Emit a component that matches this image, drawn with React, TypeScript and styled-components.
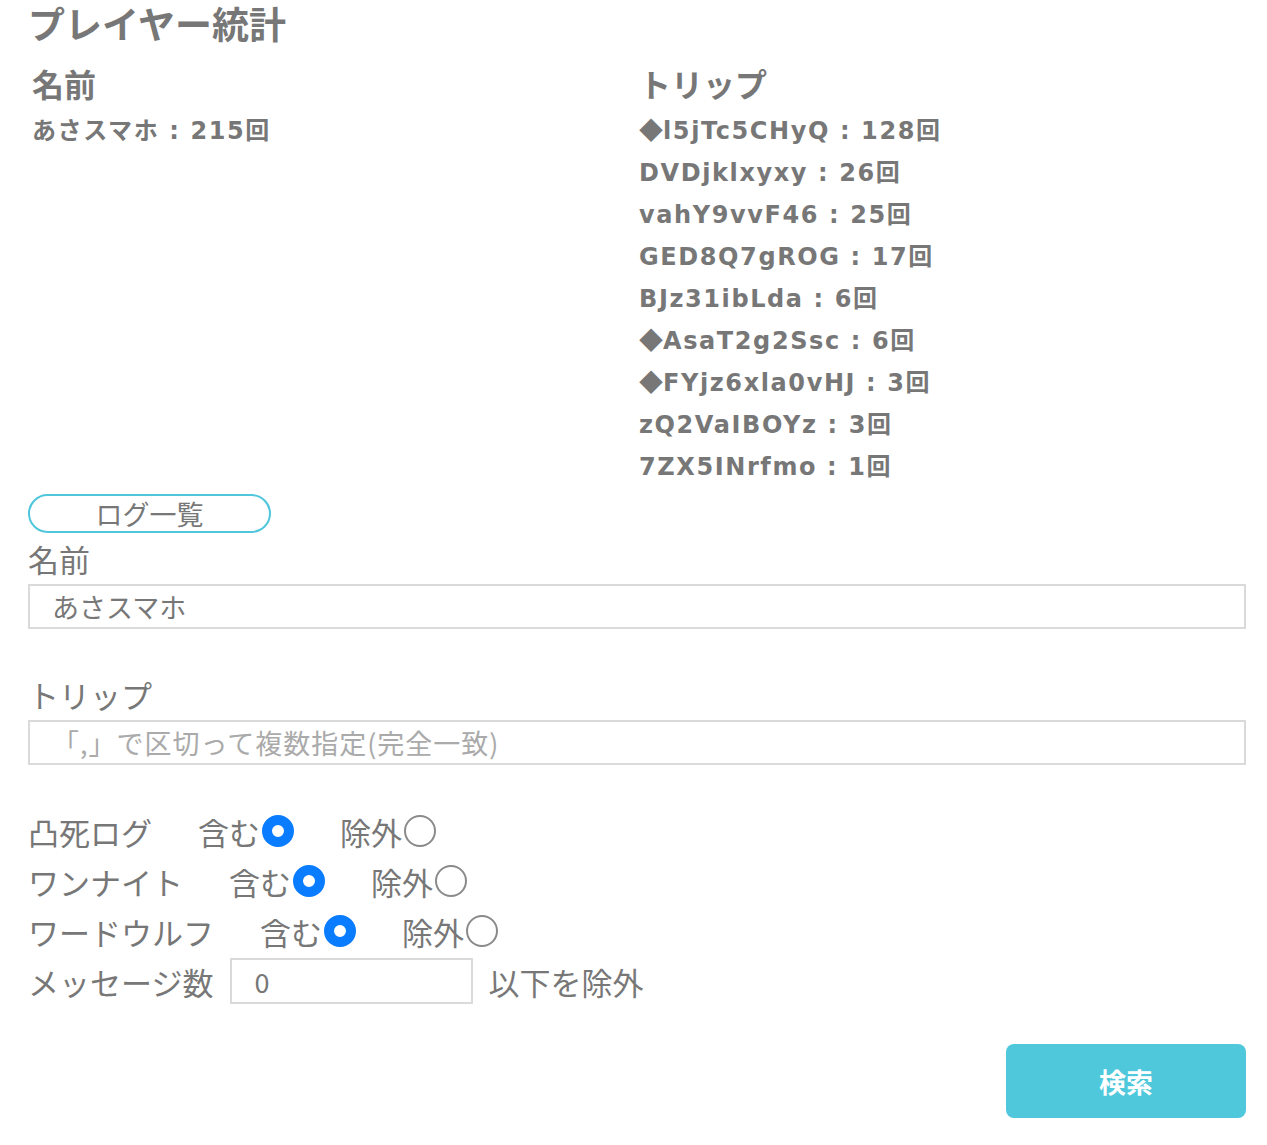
import React, { useState } from 'react';
import styled, { createGlobalStyle } from 'styled-components';

const GlobalStyle = createGlobalStyle`
body {
    margin: 0;
    background: #ffffff;
    font-family: "Noto Sans CJK JP", "Noto Sans", sans-serif;
    color: #777777;
}
`;

const Page = styled.div`
width: 1218px;
padding: 0 21px 28px 28px;
`;

const Title = styled.h1`
margin: 0;
font-size: 37px;
line-height: 46px;
font-weight: 700;
`;

const StatsGrid = styled.div`
display: grid;
grid-template-columns: 1fr 1fr;
margin-top: 16px;
`;

const StatsColumn = styled.div`
padding-left: ${(p: { $pad: number }) => p.$pad}px;
`;

const StatsHeading = styled.h2`
margin: 0 0 6px;
font-size: 32px;
line-height: 42px;
font-weight: 700;
`;

const StatsItem = styled.div`
height: 42px;
font-family: "DejaVu Sans", "Noto Sans CJK JP", sans-serif;
font-size: 24px;
line-height: 42px;
font-weight: 700;
letter-spacing: 1.6px;
white-space: nowrap;
`;

const Diamond = styled.span`
font-family: "Noto Sans CJK JP", sans-serif;
line-height: 1;
letter-spacing: 0;
`;

const LogButton = styled.button`
display: block;
margin-top: 6px;
width: 243px;
height: 39px;
border: 2px solid #4fc6dc;
border-radius: 20px;
background: #ffffff;
color: #777777;
font-family: inherit;
font-size: 27px;
line-height: 33px;
padding: 0;
`;

const FieldLabel = styled.div`
font-size: 31px;
line-height: 36px;
margin-top: ${(p: { $top: number }) => p.$top}px;
margin-bottom: 7px;
`;

const TextInput = styled.input`
display: block;
box-sizing: border-box;
width: 100%;
height: 45px;
border: 2px solid #dadada;
border-radius: 0;
padding: 0 22px;
font-family: inherit;
font-size: 27px;
color: #777777;
outline: none;
&::placeholder {
    color: #aaaaaa;
    letter-spacing: 1px;
}
`;

const FilterList = styled.div`
margin-top: 41px;
`;

const FilterRow = styled.div`
display: flex;
align-items: center;
height: 50px;
font-size: 31px;
`;

const RowLabel = styled.span`
margin-right: 46px;
white-space: nowrap;
`;

const Choice = styled.label`
display: flex;
align-items: center;
margin-right: 46px;
cursor: pointer;
`;

const Radio = styled.input`
appearance: none;
box-sizing: border-box;
width: 32px;
height: 32px;
margin: 0 0 0 2px;
border-radius: 50%;
border: 2.5px solid #8a8a8a;
background: #ffffff;
&:checked {
    border: 10px solid #0a7cff;
}
`;

const CountInput = styled(TextInput)`
width: 243px;
height: 46px;
margin: 0 15px 0 17px;
`;

const Footer = styled.div`
display: flex;
justify-content: flex-end;
margin-top: 38px;
`;

const SearchButton = styled.button`
width: 240px;
height: 74px;
border: none;
border-radius: 8px;
background: #50c8dc;
color: #ffffff;
font-family: inherit;
font-size: 27px;
font-weight: 700;
`;

const trips = [
    { name: 'l5jTc5CHyQ', count: 128, mark: true },
    { name: 'DVDjklxyxy', count: 26, mark: false },
    { name: 'vahY9vvF46', count: 25, mark: false },
    { name: 'GED8Q7gROG', count: 17, mark: false },
    { name: 'BJz31ibLda', count: 6, mark: false },
    { name: 'AsaT2g2Ssc', count: 6, mark: true },
    { name: 'FYjz6xla0vHJ', count: 3, mark: true },
    { name: 'zQ2VaIBOYz', count: 3, mark: false },
    { name: '7ZX5INrfmo', count: 1, mark: false },
];

const filters = ['凸死ログ', 'ワンナイト', 'ワードウルフ'];

const App: React.FC = () => {
    const [picked, setPicked] = useState<Record<string, string>>({
        凸死ログ: 'in',
        ワンナイト: 'in',
        ワードウルフ: 'in',
    });

    return (
        <Page>
            <GlobalStyle />
            <Title>プレイヤー統計</Title>
            <StatsGrid>
                <StatsColumn $pad={4}>
                    <StatsHeading>名前</StatsHeading>
                    <StatsItem>あさスマホ : 215回</StatsItem>
                </StatsColumn>
                <StatsColumn $pad={2}>
                    <StatsHeading>トリップ</StatsHeading>
                    {trips.map((t) => (
                        <StatsItem key={t.name}>
                            {t.mark && <Diamond>◆</Diamond>}
                            {`${t.name} : ${t.count}回`}
                        </StatsItem>
                    ))}
                </StatsColumn>
            </StatsGrid>
            <LogButton>ログ一覧</LogButton>
            <FieldLabel $top={8}>名前</FieldLabel>
            <TextInput defaultValue="あさスマホ" />
            <FieldLabel $top={48}>トリップ</FieldLabel>
            <TextInput placeholder="「,」で区切って複数指定(完全一致)" />
            <FilterList>
                {filters.map((f) => (
                    <FilterRow key={f}>
                        <RowLabel>{f}</RowLabel>
                        <Choice>
                            含む
                            <Radio
                                type="radio"
                                name={f}
                                checked={picked[f] === 'in'}
                                onChange={() => setPicked({ ...picked, [f]: 'in' })}
                            />
                        </Choice>
                        <Choice>
                            除外
                            <Radio
                                type="radio"
                                name={f}
                                checked={picked[f] === 'out'}
                                onChange={() => setPicked({ ...picked, [f]: 'out' })}
                            />
                        </Choice>
                    </FilterRow>
                ))}
                <FilterRow>
                    メッセージ数
                    <CountInput defaultValue="0" />
                    以下を除外
                </FilterRow>
            </FilterList>
            <Footer>
                <SearchButton>検索</SearchButton>
            </Footer>
        </Page>
    );
};

export default App;
